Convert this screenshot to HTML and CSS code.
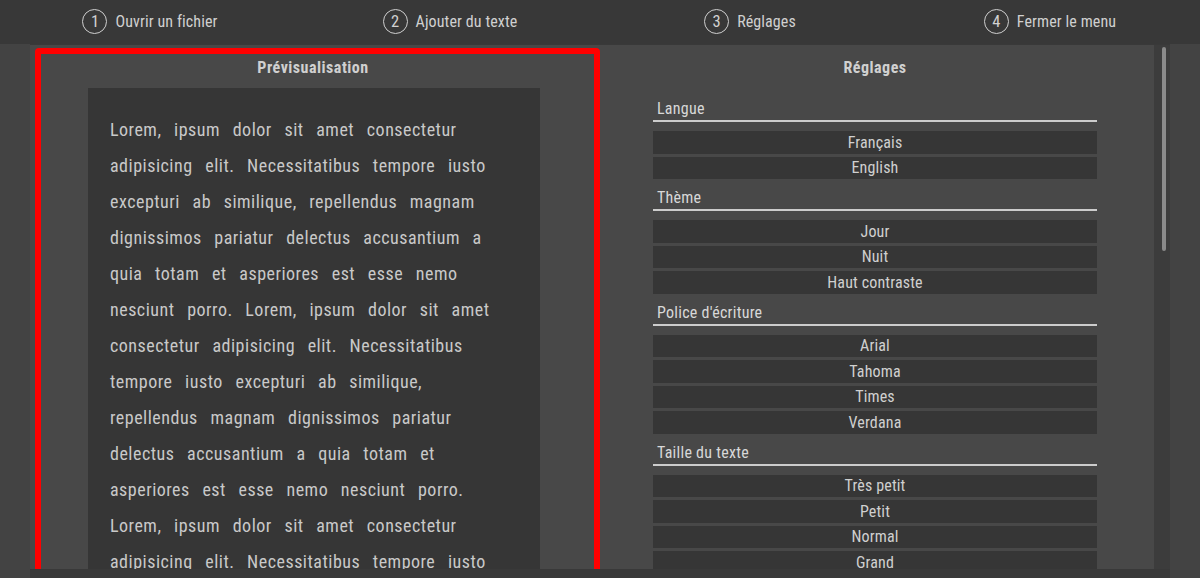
FILE: index.html
```html
<!DOCTYPE html>
<html lang="fr">
<head>
<meta charset="utf-8">
<title>Réglages</title>
<link rel="stylesheet" href="styles.css">
</head>
<body>
<header class="topbar">
  <div class="step"><span class="num">1</span><span class="label">Ouvrir un fichier</span></div>
  <div class="step"><span class="num">2</span><span class="label">Ajouter du texte</span></div>
  <div class="step"><span class="num">3</span><span class="label">Réglages</span></div>
  <div class="step"><span class="num">4</span><span class="label">Fermer le menu</span></div>
</header>
<div class="main">
  <div class="side"></div>
  <div class="center">
    <div class="scroller">
      <div class="panel">
        <section class="preview">
          <h2 class="title">Prévisualisation</h2>
          <div class="paper">
            <p class="lorem">Lorem, ipsum dolor sit amet consectetur adipisicing elit. Necessitatibus tempore iusto excepturi ab similique, repellendus magnam dignissimos pariatur delectus accusantium a quia totam et asperiores est esse nemo nesciunt porro. Lorem, ipsum dolor sit amet consectetur adipisicing elit. Necessitatibus tempore iusto excepturi ab similique, repellendus magnam dignissimos pariatur delectus accusantium a quia totam et asperiores est esse nemo nesciunt porro. Lorem, ipsum dolor sit amet consectetur adipisicing elit. Necessitatibus tempore iusto excepturi ab similique, repellendus magnam dignissimos pariatur delectus accusantium a quia totam et asperiores est esse nemo nesciunt porro.</p>
          </div>
          <div class="focus-ring"></div>
        </section>
        <section class="settings">
          <h2 class="title">Réglages</h2>
          <div class="group">
            <h3 class="gtitle">Langue</h3>
            <div class="opts">
              <button class="opt">Français</button>
              <button class="opt">English</button>
            </div>
          </div>
          <div class="group">
            <h3 class="gtitle">Thème</h3>
            <div class="opts">
              <button class="opt">Jour</button>
              <button class="opt">Nuit</button>
              <button class="opt">Haut contraste</button>
            </div>
          </div>
          <div class="group">
            <h3 class="gtitle">Police d'écriture</h3>
            <div class="opts">
              <button class="opt">Arial</button>
              <button class="opt">Tahoma</button>
              <button class="opt">Times</button>
              <button class="opt">Verdana</button>
            </div>
          </div>
          <div class="group">
            <h3 class="gtitle">Taille du texte</h3>
            <div class="opts">
              <button class="opt">Très petit</button>
              <button class="opt">Petit</button>
              <button class="opt">Normal</button>
              <button class="opt">Grand</button>
            </div>
          </div>
        </section>
      </div>
      <div class="scrollbar"><div class="thumb"></div></div>
    </div>
  </div>
  <div class="side"></div>
</div>
</body>
</html>
```
FILE: styles.css
```css
* { box-sizing: border-box; }
html, body { margin: 0; padding: 0; }
body {
  width: 1200px;
  height: 578px;
  overflow: hidden;
  background: #434343;
  font-family: "Roboto Condensed", "Liberation Sans", sans-serif;
  color: #d2d2d2;
}
.topbar {
  height: 44px;
  background: #383838;
  display: grid;
  grid-template-columns: repeat(4, 1fr);
  align-items: center;
}
.step {
  display: flex;
  align-items: center;
  justify-content: center;
  gap: 8px;
  padding-bottom: 1px;
}
.num {
  width: 25px;
  height: 25px;
  border: 1.5px solid #cfcfcf;
  border-radius: 50%;
  display: flex;
  align-items: center;
  justify-content: center;
  font-size: 16.5px;
  color: #d2d2d2;
}
.label { font-size: 16px; letter-spacing: 0.1px; color: #d0d0d0; }
.main {
  display: flex;
  height: 534px;
}
.side { width: 30px; background: #434343; }
.center {
  width: 1140px;
  background: #393939;
  padding-top: 1px;
}
.scroller {
  display: flex;
  height: 524px;
  overflow: hidden;
}
.panel {
  width: 1124px;
  background: #484848;
  display: grid;
  grid-template-columns: 562px 562px;
  overflow: hidden;
}
.preview { position: relative; display: flex; flex-direction: column; align-items: center; }
.title {
  margin: 0;
  height: 43px;
  display: flex;
  align-items: center;
  justify-content: center;
  padding: 1px 0 0 4px;
  font-size: 16px;
  letter-spacing: 0.5px;
  font-weight: bold;
  color: #d0d0d0;
}
.paper {
  width: 452px;
  margin-left: 6px;
  flex: 1;
  background: #363636;
  padding: 24px 40px 0 22px;
}
.lorem {
  margin: 0;
  font-size: 18px;
  line-height: 36px;
  letter-spacing: 0.5px;
  word-spacing: 8px;
  color: #c9c9c9;
}
.focus-ring {
  position: absolute;
  left: 5px;
  top: 3px;
  width: 565px;
  height: 528px;
  border: 6px solid #ff0000;
  border-radius: 4px;
}
.settings {
  display: flex;
  flex-direction: column;
  align-items: center;
}
.group {
  width: 444px;
  margin-left: 4px;
}
.gtitle {
  margin: 0;
  padding: 0 4px 2px;
  height: 32px;
  display: flex;
  align-items: flex-end;
  font-size: 16px;
  letter-spacing: 0.25px;
  font-weight: normal;
  color: #d8d8d8;
  border-bottom: 2px solid #cccccc;
}
.group:first-of-type .gtitle { height: 34px; }
.opts {
  display: flex;
  flex-direction: column;
  gap: 3px;
  padding-top: 9px;
}
.opt {
  height: 22.5px;
  border: 0;
  margin: 0;
  padding: 0;
  background: #363636;
  color: #d0d0d0;
  font-family: inherit;
  font-size: 16px;
  letter-spacing: 0.15px;
  text-align: center;
}
.scrollbar {
  width: 16px;
  background: #3c3c3c;
  display: flex;
  justify-content: center;
  padding-top: 2px;
}
.thumb {
  width: 4px;
  height: 204px;
  margin-left: 4px;
  background: #8a8a8a;
  border-radius: 2px;
}
```
